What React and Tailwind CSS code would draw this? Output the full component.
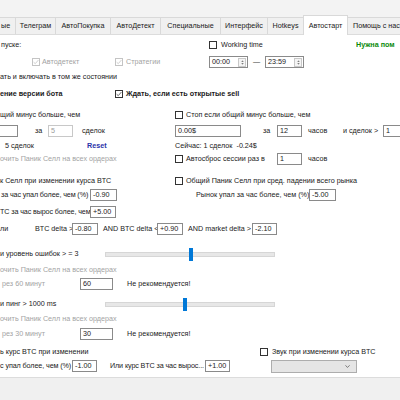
import React from 'react'

function Cb({ checked, disabled }) {
  return (
    <span
      className={
        disabled
          ? 'flex h-[8px] w-[8px] shrink-0 items-center justify-center border border-[#c4c4c4] bg-white'
          : 'flex h-[8px] w-[8px] shrink-0 items-center justify-center border border-[#333] bg-white'
      }
    >
      {checked ? (
        <svg viewBox="0 0 8 8" className="h-[6px] w-[6px]">
          <path d="M0.8 4.2 L3 6.2 L7.2 1.4" fill="none" stroke={disabled ? '#b8b8b8' : '#222'} strokeWidth="0.9" />
        </svg>
      ) : null}
    </span>
  )
}

function Box({ className, children, dim }) {
  return (
    <div
      className={
        (dim
          ? 'flex h-[12px] shrink-0 items-center border border-[#c8c8c8] bg-white px-[2px] text-[#9a9a9a] '
          : 'flex h-[12px] shrink-0 items-center border border-[#8a8a8a] bg-white px-[2px] ') + className
      }
    >
      {children}
    </div>
  )
}

function TimeBox({ value }) {
  return (
    <div className="flex h-[12px] w-[39px] shrink-0 items-center justify-between border border-[#8a8a8a] bg-white pl-[2px] pr-[1px]">
      <span>{value}</span>
      <span className="flex h-[9px] w-[8px] flex-col items-center justify-center border border-[#c8c8c8] bg-[#f4f4f4]">
        <svg viewBox="0 0 6 8" className="h-[7px] w-[5px]">
          <path d="M1.5 3 L3 1.5 L4.5 3 Z M1.5 5 L3 6.5 L4.5 5 Z" fill="#555" />
        </svg>
      </span>
    </div>
  )
}

function Slider({ thumb }) {
  return (
    <div className="relative h-[5px] w-[170px] shrink-0 border border-[#d6d6d6] bg-[#e7e7e7]">
      <div className={'absolute top-[-5px] h-[13px] w-[4px] bg-[#0078d7] ' + thumb} />
    </div>
  )
}

const tabs = [
  { label: 'ые', w: 'w-[15px] justify-start pl-[1px] border-l-0' },
  { label: 'Телеграм', w: 'w-[40px] justify-center' },
  { label: 'АвтоПокупка', w: 'w-[55px] justify-center' },
  { label: 'АвтоДетект', w: 'w-[50px] justify-center' },
  { label: 'Специальные', w: 'w-[60px] justify-center' },
  { label: 'Интерфейс', w: 'w-[47px] justify-center' },
  { label: 'Hotkeys', w: 'w-[36px] justify-center' },
]

export default function App() {
  return (
    <div className="h-[400px] w-[400px] overflow-hidden bg-[#f0f0f0] font-['Liberation_Sans',Arial,sans-serif] text-[7.2px] leading-none text-[#1a1a1a]">
      <div className="h-[17px] bg-[#f3f3f3]" />

      {/* tabs */}
      <div className="flex h-[17px] items-end">
        {tabs.map((t) => (
          <div
            key={t.label}
            className={'flex h-[17px] shrink-0 items-center border-l border-t border-[#d9d9d9] bg-[#f0f0f0] ' + t.w}
          >
            {t.label}
          </div>
        ))}
        <div className="relative z-10 mb-[-1px] flex h-[20px] w-[45px] shrink-0 items-center justify-center border-l border-r border-t border-[#d9d9d9] bg-white">
          Автостарт
        </div>
        <div className="flex h-[17px] w-[52px] shrink-0 items-center overflow-hidden whitespace-nowrap border-t border-[#d9d9d9] bg-[#f0f0f0] pl-[5px]">
          Помощь с нас
        </div>
      </div>

      {/* page */}
      <div className="h-[344px] border-b border-t border-[#dcdcdc] bg-white">
        {/* A */}
        <div className="mt-[4px] flex h-[12px] items-center whitespace-nowrap">
          <span className="w-[209px] shrink-0 pl-[1px]">пуске:</span>
          <Cb />
          <span className="ml-[4px] w-[135px] shrink-0">Working time</span>
          <span className="w-[40px] shrink-0 overflow-hidden font-bold text-[#0b8a0b]">Нужна пом</span>
        </div>

        {/* B */}
        <div className="mt-[5px] flex h-[12px] items-center whitespace-nowrap">
          <span className="w-[32px] shrink-0" />
          <Cb checked disabled />
          <span className="ml-[2px] w-[73px] shrink-0 text-[#a3a3a3]">Автодетект</span>
          <Cb checked disabled />
          <span className="ml-[3px] w-[83px] shrink-0 text-[#a3a3a3]">Стратегии</span>
          <TimeBox value="00:00" />
          <span className="ml-[5px] w-[12px] shrink-0 text-[#333]">—</span>
          <TimeBox value="23:59" />
        </div>

        {/* C */}
        <div className="mt-[3px] flex h-[12px] items-center whitespace-nowrap">
          <span>ать и включать в том же состоянии</span>
        </div>

        {/* D */}
        <div className="mt-[5px] flex h-[12px] items-center whitespace-nowrap font-bold">
          <span className="w-[115px] shrink-0">ение версии бота</span>
          <Cb checked />
          <span className="ml-[3px]">Ждать, если есть открытые sell</span>
        </div>

        {/* E */}
        <div className="mt-[9px] flex h-[12px] items-center whitespace-nowrap">
          <span className="w-[175px] shrink-0">щий минус больше, чем</span>
          <Cb />
          <span className="ml-[3px]">Стоп если общий минус больше, чем</span>
        </div>

        {/* F */}
        <div className="mt-[4px] flex h-[12px] items-center whitespace-nowrap">
          <Box className="w-[18px] border-l-0" />
          <span className="ml-[17px] w-[13px] shrink-0">за</span>
          <Box className="w-[25px]" dim>5</Box>
          <span className="ml-[9px] w-[93px] shrink-0">сделок</span>
          <Box className="w-[66px]">0.00$</Box>
          <span className="ml-[22px] w-[14px] shrink-0">за</span>
          <Box className="w-[25px]">12</Box>
          <span className="ml-[6px] w-[35px] shrink-0">часов</span>
          <span className="w-[40px] shrink-0">и сделок &gt;</span>
          <Box className="w-[25px]">1</Box>
        </div>

        {/* G */}
        <div className="mt-[3px] flex h-[12px] items-center whitespace-nowrap">
          <span className="w-[82px] shrink-0 pl-[5px]">5 сделок</span>
          <span className="w-[93px] shrink-0 pl-[5px] font-bold text-[#2a32a8]">Reset</span>
          <span>Сейчас: 1 сделок&nbsp;&nbsp;-0.24$</span>
        </div>

        {/* H */}
        <div className="mt-[1px] flex h-[12px] items-center whitespace-nowrap">
          <span className="w-[175px] shrink-0 text-[#a3a3a3]">очить Паник Селл на всех ордерах</span>
          <Cb />
          <span className="ml-[3px] w-[91px] shrink-0">Автосброс сессии раз в</span>
          <Box className="w-[25px]">1</Box>
          <span className="ml-[6px]">часов</span>
        </div>

        {/* I */}
        <div className="mt-[10px] flex h-[12px] items-center whitespace-nowrap">
          <span className="w-[175px] shrink-0">к Селл при изменении курса BTC</span>
          <Cb />
          <span className="ml-[3px]">Общий Паник Селл при сред. падении всего рынка</span>
        </div>

        {/* J */}
        <div className="mt-[2px] flex h-[12px] items-center whitespace-nowrap">
          <span className="w-[90px] shrink-0 pl-[1px] tracking-[-0.12px]">за час упал более, чем (%)</span>
          <Box className="w-[27px]">-0.90</Box>
          <span className="ml-[79px] w-[113px] shrink-0">Рынок упал за час более, чем (%)</span>
          <Box className="w-[27px]">-5.00</Box>
        </div>

        {/* K */}
        <div className="mt-[5px] flex h-[12px] items-center whitespace-nowrap">
          <span className="w-[90px] shrink-0 tracking-[-0.12px]">TC за час вырос более, чем</span>
          <Box className="w-[26px]">+5.00</Box>
        </div>

        {/* L */}
        <div className="mt-[5px] flex h-[12px] items-center whitespace-nowrap">
          <span className="w-[35px] shrink-0">ли</span>
          <span className="w-[37px] shrink-0">BTC delta &gt;</span>
          <Box className="w-[26px]">-0.80</Box>
          <span className="ml-[5px] w-[54px] shrink-0">AND BTC delta &lt;</span>
          <Box className="w-[26px]">+0.90</Box>
          <span className="ml-[5px] w-[64px] shrink-0">AND market delta &gt;</span>
          <Box className="w-[25px]">-2.10</Box>
        </div>

        {/* M */}
        <div className="mt-[13px] flex h-[12px] items-center whitespace-nowrap">
          <span className="w-[105px] shrink-0">и уровень ошибок &gt; = 3</span>
          <Slider thumb="left-[83px]" />
        </div>

        {/* N */}
        <div className="mt-[4px] flex h-[12px] items-center whitespace-nowrap text-[#a3a3a3]">
          <span>очить Паник Селл на всех ордерах</span>
        </div>

        {/* O */}
        <div className="mt-[2px] flex h-[12px] items-center whitespace-nowrap">
          <span className="w-[80px] shrink-0 pl-[2px] text-[#a3a3a3]">рез 60 минут</span>
          <Box className="w-[33px]">60</Box>
          <span className="ml-[14px]">Не рекомендуется!</span>
        </div>

        {/* P */}
        <div className="mt-[8px] flex h-[12px] items-center whitespace-nowrap">
          <span className="w-[105px] shrink-0">и пинг &gt; 1000 ms</span>
          <Slider thumb="left-[77px]" />
        </div>

        {/* Q */}
        <div className="mt-[3px] flex h-[12px] items-center whitespace-nowrap text-[#a3a3a3]">
          <span>очить Паник Селл на всех ордерах</span>
        </div>

        {/* R */}
        <div className="mt-[3px] flex h-[12px] items-center whitespace-nowrap">
          <span className="w-[80px] shrink-0 pl-[2px] text-[#a3a3a3]">рез 30 минут</span>
          <Box className="w-[33px]">30</Box>
          <span className="ml-[14px]">Не рекомендуется!</span>
        </div>

        {/* S */}
        <div className="mt-[6px] flex h-[12px] items-center whitespace-nowrap">
          <span className="w-[260px] shrink-0">ь курс BTC при изменении</span>
          <Cb />
          <span className="ml-[4px]">Звук при изменении курса BTC</span>
        </div>

        {/* T */}
        <div className="mt-[2px] flex h-[12px] items-center whitespace-nowrap">
          <span className="w-[72px] shrink-0 tracking-[-0.1px]">с упал более, чем (%)</span>
          <Box className="w-[25px]">-1.00</Box>
          <span className="ml-[13px] w-[95px] shrink-0 tracking-[-0.12px]">Или курс BTC за час вырос...</span>
          <Box className="w-[25px]">+1.00</Box>
          <div className="ml-[41px] flex h-[13px] w-[86px] shrink-0 items-center justify-end border border-[#adadad] bg-[#e5e5e5] pr-[6px]">
            <svg viewBox="0 0 8 5" className="h-[3px] w-[5px]">
              <path d="M0.5 0.5 L4 4 L7.5 0.5" fill="none" stroke="#333" strokeWidth="1" />
            </svg>
          </div>
        </div>
      </div>
    </div>
  )
}
